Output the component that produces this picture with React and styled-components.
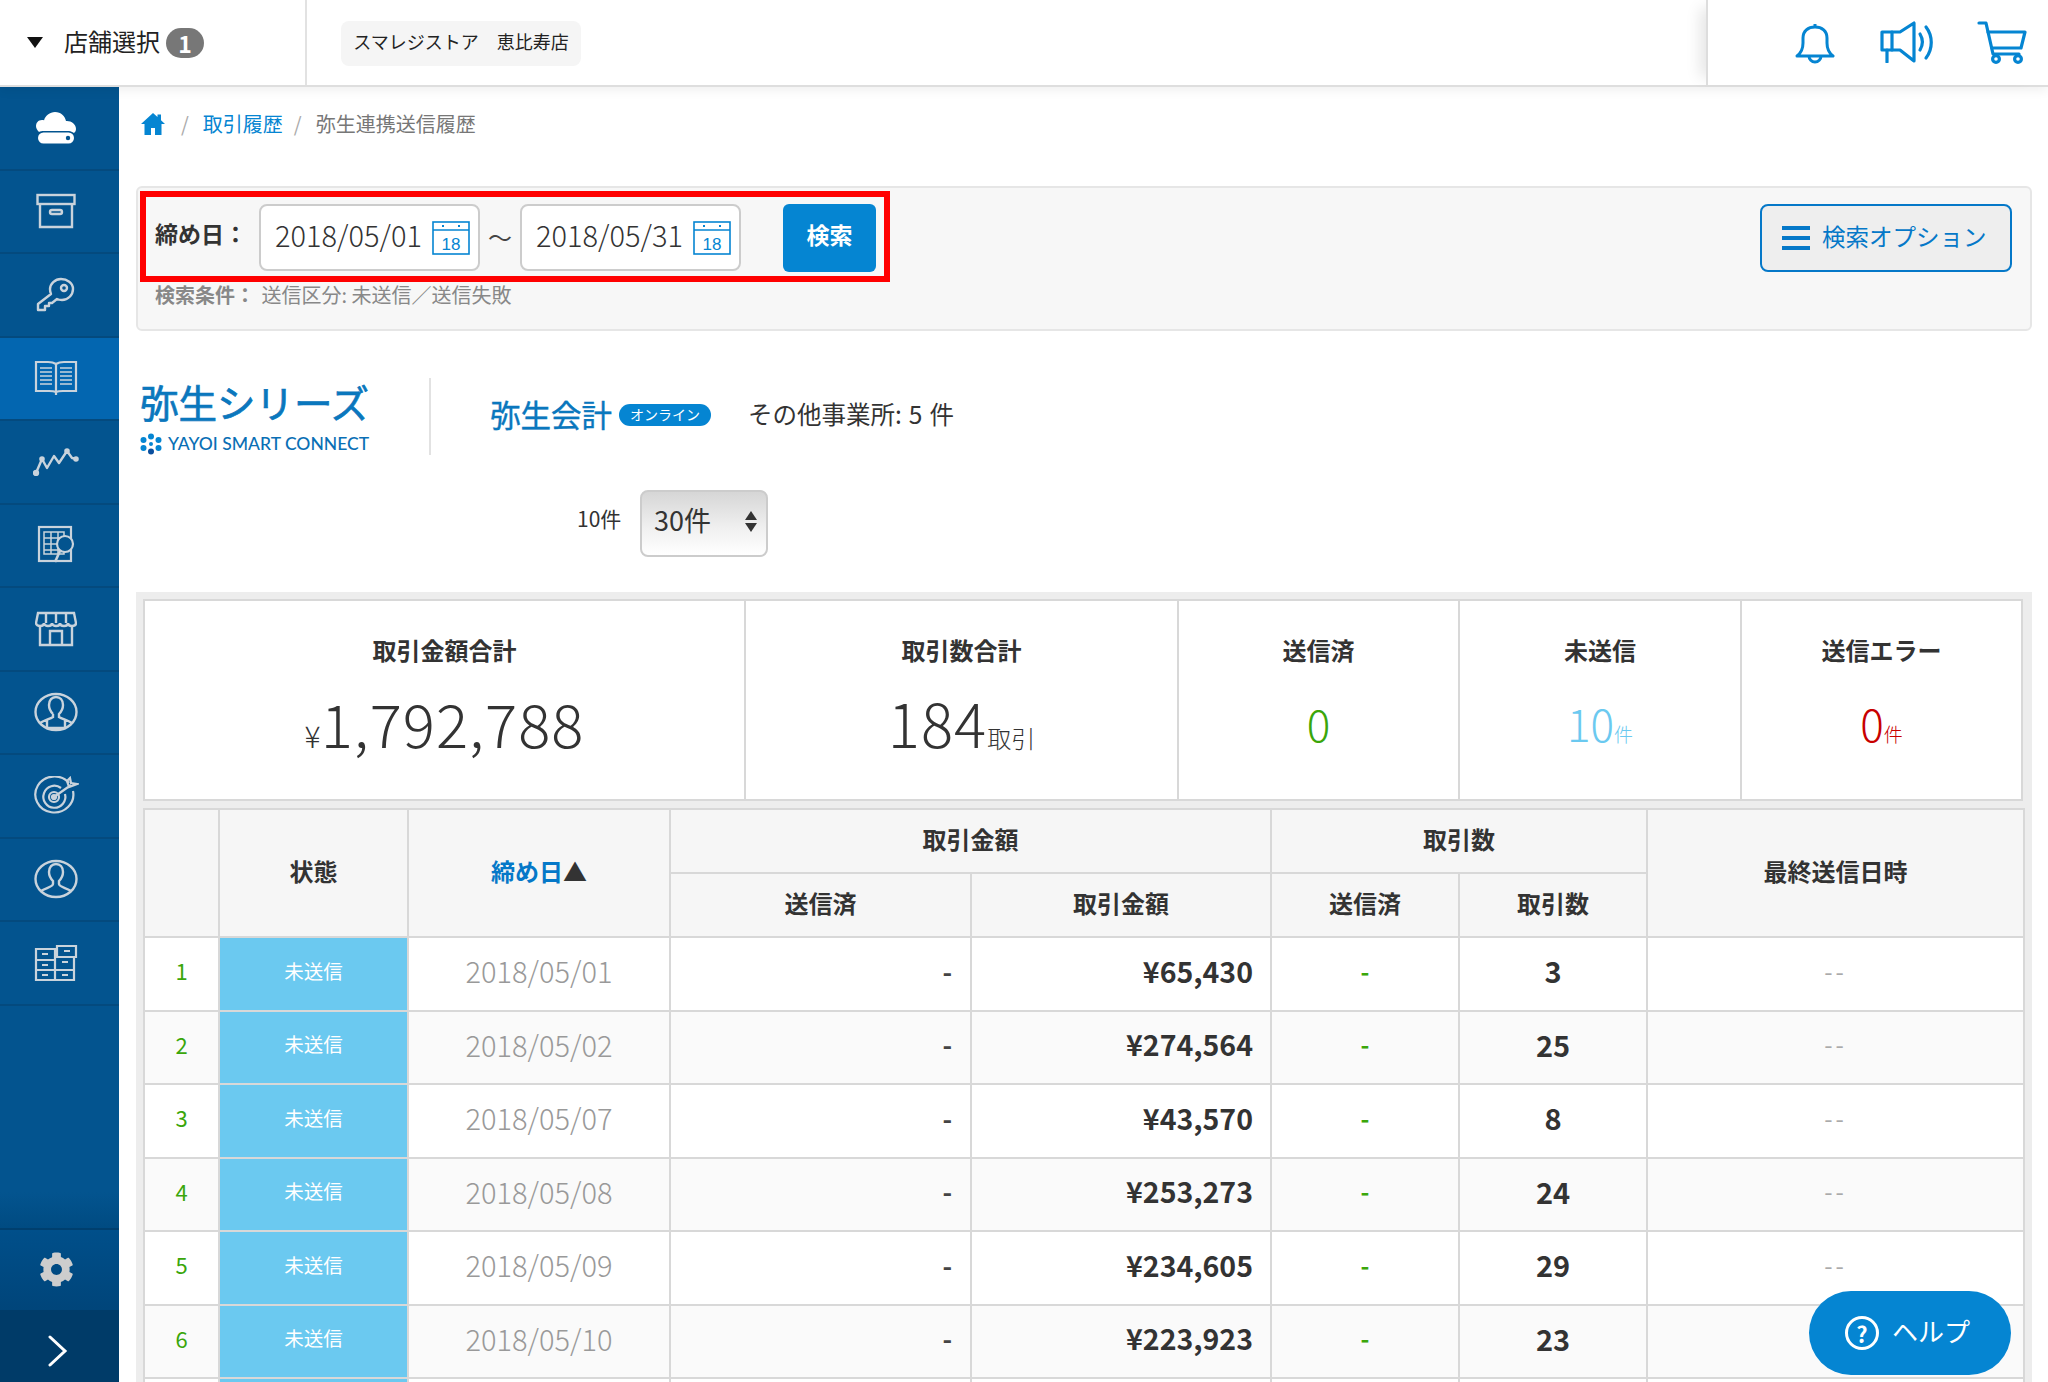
import styled, { createGlobalStyle } from "styled-components";
import { FaCog } from "react-icons/fa";

const blue = "#0585d2";
const line = "#d8d8d8";
const jp = `"Noto Sans CJK JP", "Noto Sans", sans-serif`;

const rows = [
    { no: 1, date: "2018/05/01", amount: "¥65,430", count: 3 },
    { no: 2, date: "2018/05/02", amount: "¥274,564", count: 25 },
    { no: 3, date: "2018/05/07", amount: "¥43,570", count: 8 },
    { no: 4, date: "2018/05/08", amount: "¥253,273", count: 24 },
    { no: 5, date: "2018/05/09", amount: "¥234,605", count: 29 },
    { no: 6, date: "2018/05/10", amount: "¥223,923", count: 23 },
];

const navIcons = [
    <svg width="40" height="32" viewBox="0 0 40 32" key="cloud">
        <path fill="#fff" d="M3 20C1 18 0 16 0 14c0-3 2-6 6-6 1 0 2 0 2 .5C9 4 14 0 19 0c6 0 10 4 11 9 5-.5 10 3 10 8 0 2-1 3-2 4-2-1-3-2-5-2H8c-2 0-4 0-5 1z" />
        <rect x="2" y="20.5" width="36" height="11" rx="5.5" fill="#fff" />
        <circle cx="32" cy="26" r="2.2" fill="#03548f" />
    </svg>,
    <svg width="40" height="36" viewBox="0 0 40 36" key="box" fill="none" stroke="#c9d3dc" strokeWidth="2.4">
        <rect x="1.5" y="2" width="37" height="9" />
        <path d="M4 11v23h32V11" />
        <rect x="14" y="17" width="12" height="4" rx="2" />
    </svg>,
    <svg width="40" height="36" viewBox="0 0 40 36" key="key" fill="none" stroke="#c9d3dc" strokeWidth="2.4" strokeLinejoin="round">
        <path d="M25 2c-6 0-11 5-11 10 0 2 0 3 1 5L2 27v6h7v-4h4v-3h3l5-4c2 1 3 1 5 1 6 0 11-5 11-11S31 2 25 2z" />
        <circle cx="28" cy="11" r="3" />
    </svg>,
    <svg width="44" height="36" viewBox="0 0 44 36" key="book" fill="none" stroke="#c9d3dc" strokeWidth="2.2">
        <path d="M22 4c-3-2-6-2-8-2H2v29h13c3 0 5 0 7 1 2-1 4-1 7-1h13V2H30c-2 0-5 0-8 2zM22 4v31" />
        <path strokeWidth="1.5" d="M6 8h12M6 12h12M6 16h12M6 20h12M6 24h12M26 8h12M26 12h12M26 16h12M26 20h12M26 24h12" />
    </svg>,
    <svg width="46" height="28" viewBox="0 0 46 28" key="chart" fill="none" stroke="#c9d3dc" strokeWidth="2.4" strokeLinejoin="round">
        <path d="M3 25 9 11l5 9 7-12 5 7 8-12 5 7 5 1" />
        <circle cx="3" cy="25" r="2" fill="#c9d3dc" />
        <circle cx="9" cy="11" r="1.6" fill="#c9d3dc" />
        <circle cx="34" cy="3" r="1.6" fill="#c9d3dc" />
        <circle cx="43" cy="11" r="1.6" fill="#c9d3dc" />
    </svg>,
    <svg width="38" height="40" viewBox="0 0 38 40" key="sheet" fill="none" stroke="#c9d3dc" strokeWidth="2.2">
        <rect x="2" y="2" width="32" height="34" />
        <path strokeWidth="1.5" d="M7 7h20v22H7zM7 13h20M7 19h20M7 25h20M14 7v22M21 7v22" />
        <circle cx="28" cy="19" r="8" fill="#03548f" />
        <path d="M23 26l-5 11" strokeWidth="2.6" />
    </svg>,
    <svg width="42" height="36" viewBox="0 0 42 36" key="shop" fill="none" stroke="#c9d3dc" strokeWidth="2.4">
        <path d="M3 2h36l2 10c0 2-2 3-4 3s-4-1-4-3c0 2-2 3-4 3s-4-1-4-3c0 2-2 3-4 3s-4-1-4-3c0 2-2 3-4 3s-4-1-4-3c0 2-2 3-4 3s-4-1-4-3z" />
        <path d="M11 2v10M21 2v10M31 2v10M5 14v20h32V14M15 34V20h12v14" />
    </svg>,
    <svg width="44" height="40" viewBox="0 0 44 40" key="person1" fill="none" stroke="#c9d3dc" strokeWidth="2.4">
        <ellipse cx="22" cy="20" rx="20.5" ry="18" />
        <path d="M15 13c0-5 3-8 7-8s7 3 7 8c0 4-2 7-4 9v3c3 2 8 3 13 6M19 22c-2-2-4-5-4-9M19 22v3c-3 2-8 3-13 6M13 28v8h18v-8" />
    </svg>,
    <svg width="46" height="40" viewBox="0 0 46 40" key="target" fill="none" stroke="#c9d3dc" strokeWidth="2.2">
        <path d="M36 7A19 18 0 1 0 40 15" />
        <path d="M28 12A11 11 0 1 0 32 18" />
        <circle cx="21" cy="21" r="5" />
        <circle cx="21" cy="21" r="2" fill="#c9d3dc" />
        <path d="M21 21 38 9M34 5l2 6 8-3-6-1-1-5z" />
    </svg>,
    <svg width="44" height="40" viewBox="0 0 44 40" key="person2" fill="none" stroke="#c9d3dc" strokeWidth="2.4">
        <ellipse cx="22" cy="20" rx="20.5" ry="18" />
        <path d="M7 32c4-3 12-4 12-7v-3c-2-2-4-5-4-9 0-5 3-8 7-8s7 3 7 8c0 4-2 7-4 9v3c0 3 8 4 12 7" />
    </svg>,
    <svg width="44" height="38" viewBox="0 0 44 38" key="drawers" fill="none" stroke="#c9d3dc" strokeWidth="2.2">
        <path d="M2 5h19v11H2zM23 2h19v11H23zM2 16h19v10H2zM21 13h19v13H21zM2 26h19v10H2zM21 26h19v10H21z" />
        <path d="M8 10h6M30 7h6M8 21h6M28 18h6M8 31h6M28 31h6" />
    </svg>,
];

function Calendar() {
    return (
        <svg width="38" height="34" viewBox="0 0 38 34" fill="none" stroke={blue} strokeWidth="1.6">
            <rect x="1" y="1" width="36" height="32" />
            <path d="M1 9h36" />
            <path d="M10 5h2M26 5h2" strokeWidth="2" />
            <text x="19" y="29" fontSize="17" textAnchor="middle" fill={blue} stroke="none" fontFamily="Liberation Sans">
                18
            </text>
        </svg>
    );
}

function App() {
    return (
        <Page>
            <GlobalStyle />
            <Header>
                <StoreSelect>
                    <Caret />
                    <StoreLabel>店舗選択</StoreLabel>
                    <CountBadge>1</CountBadge>
                </StoreSelect>
                <StoreChip>スマレジストア　恵比寿店</StoreChip>
                <HeaderIcons>
                    <BellIcon width="40" height="44" viewBox="0 0 40 44" fill="none" stroke={blue} strokeWidth="3" strokeLinejoin="round">
                        <path d="M2 34c4-3 6-7 6-13v-5C8 9 13 5 20 5s12 4 12 11v5c0 6 2 10 6 13z" />
                        <path d="M20 5V2M14 34a6 6 0 0 0 12 0" />
                    </BellIcon>
                    <svg width="56" height="42" viewBox="0 0 56 42" fill="none" stroke={blue} strokeWidth="3.2" strokeLinejoin="round" strokeLinecap="round">
                        <path d="M2 11h18L34 2v38L20 29H2z" />
                        <path d="M12 11v18M7 29v12" />
                        <path d="M40 13c3 5 3 11 0 16M46 6c7 9 7 22 0 31" />
                    </svg>
                    <svg width="50" height="44" viewBox="0 0 50 44" fill="none" stroke={blue} strokeWidth="3.2" strokeLinejoin="round" strokeLinecap="round">
                        <path d="M2 3h7l7 31h26" />
                        <path d="M11 12h37l-4 16H15" />
                        <circle cx="19" cy="39" r="3.4" />
                        <circle cx="41" cy="39" r="3.4" />
                    </svg>
                </HeaderIcons>
            </Header>
            <Body>
                <Sidebar>
                    <NavList>
                        {navIcons.map((icon, idx) => (
                            <NavItem key={idx} $active={idx === 3}>
                                {icon}
                            </NavItem>
                        ))}
                    </NavList>
                    <SettingRow>
                        <FaCog size={35} color="#cdcdcd" />
                    </SettingRow>
                    <CollapseRow>
                        <svg width="22" height="32" viewBox="0 0 22 32" fill="none" stroke="#fff" strokeWidth="3" strokeLinecap="round">
                            <path d="M3 2l15 14L3 30" />
                        </svg>
                    </CollapseRow>
                </Sidebar>
                <Main>
                    <Breadcrumb>
                        <HomeLink>
                            <svg width="24" height="22" viewBox="0 0 24 22" fill={blue}>
                                <path d="M12 0 0 11h3.5v11H10v-7h4v7h6.5V11H24l-4-3.7V1.5h-3.5v2.6z" />
                            </svg>
                        </HomeLink>
                        <Slash>/</Slash>
                        <CrumbLink>取引履歴</CrumbLink>
                        <Slash>/</Slash>
                        <span>弥生連携送信履歴</span>
                    </Breadcrumb>
                    <SearchPanel>
                        <SearchRow>
                            <DateLabel>締め日：</DateLabel>
                            <DateInput>
                                <span>2018/05/01</span>
                                <Calendar />
                            </DateInput>
                            <Tilde>〜</Tilde>
                            <DateInput>
                                <span>2018/05/31</span>
                                <Calendar />
                            </DateInput>
                            <SearchButton>検索</SearchButton>
                            <OptionButton>
                                <Burger />
                                <span>検索オプション</span>
                            </OptionButton>
                        </SearchRow>
                        <Conditions>
                            <b>検索条件：</b> 送信区分: 未送信／送信失敗
                        </Conditions>
                        <RedFrame />
                    </SearchPanel>
                    <BrandRow>
                        <Brand>
                            <BrandTitle>弥生シリーズ</BrandTitle>
                            <BrandSub>
                                <svg width="22" height="22" viewBox="0 0 22 22" fill={blue}>
                                    <circle cx="11" cy="3.5" r="3" />
                                    <circle cx="3.5" cy="7" r="3" />
                                    <circle cx="18.5" cy="7" r="3" />
                                    <circle cx="11" cy="11" r="2" />
                                    <circle cx="3.5" cy="15" r="3" />
                                    <circle cx="18.5" cy="15" r="3" />
                                    <circle cx="11" cy="18.5" r="3" fill="#0a4f9e" />
                                </svg>
                                YAYOI SMART CONNECT
                            </BrandSub>
                        </Brand>
                        <BrandDivider />
                        <ProductName>弥生会計</ProductName>
                        <OnlinePill>オンライン</OnlinePill>
                        <OtherOffices>その他事業所: 5 件</OtherOffices>
                    </BrandRow>
                    <PagerRow>
                        <PagerLabel>10件</PagerLabel>
                        <PerPage>
                            30件
                            <SelectArrows>
                                <i />
                                <i />
                            </SelectArrows>
                        </PerPage>
                    </PagerRow>
                    <TableWrap>
                        <Summary>
                            <SummaryCell>
                                <SummaryTitle>取引金額合計</SummaryTitle>
                                <BigValue>
                                    <Yen>¥</Yen>1,792,788
                                </BigValue>
                            </SummaryCell>
                            <SummaryCell>
                                <SummaryTitle>取引数合計</SummaryTitle>
                                <BigValue>
                                    184<Unit>取引</Unit>
                                </BigValue>
                            </SummaryCell>
                            <SummaryCell>
                                <SummaryTitle>送信済</SummaryTitle>
                                <StatusValue $color="#3aa60a">0</StatusValue>
                            </SummaryCell>
                            <SummaryCell>
                                <SummaryTitle>未送信</SummaryTitle>
                                <StatusValue $color="#6bc9f0">
                                    10<small>件</small>
                                </StatusValue>
                            </SummaryCell>
                            <SummaryCell>
                                <SummaryTitle>送信エラー</SummaryTitle>
                                <StatusValue $color="#c80000">
                                    0<small>件</small>
                                </StatusValue>
                            </SummaryCell>
                        </Summary>
                        <HistoryTable>
                            <colgroup>
                                {[75, 189, 262, 301, 300, 188, 188, 377].map((w, idx) => (
                                    <col key={idx} width={w} />
                                ))}
                            </colgroup>
                            <thead>
                                <tr>
                                    <th rowSpan={2} />
                                    <th rowSpan={2}>状態</th>
                                    <SortHead rowSpan={2}>
                                        締め日<span>▲</span>
                                    </SortHead>
                                    <th colSpan={2}>取引金額</th>
                                    <th colSpan={2}>取引数</th>
                                    <th rowSpan={2}>最終送信日時</th>
                                </tr>
                                <tr>
                                    <th>送信済</th>
                                    <th>取引金額</th>
                                    <th>送信済</th>
                                    <th>取引数</th>
                                </tr>
                            </thead>
                            <tbody>
                                {rows.map((row) => (
                                    <tr key={row.no}>
                                        <NoCell>{row.no}</NoCell>
                                        <StateCell>未送信</StateCell>
                                        <DateCell>{row.date}</DateCell>
                                        <DashCell>-</DashCell>
                                        <AmountCell>{row.amount}</AmountCell>
                                        <SentCell>-</SentCell>
                                        <CountCell>{row.count}</CountCell>
                                        <LastCell>--</LastCell>
                                    </tr>
                                ))}
                                <tr>
                                    <NoCell />
                                    <StateCell />
                                    <DateCell />
                                    <DashCell />
                                    <AmountCell />
                                    <SentCell />
                                    <CountCell />
                                    <LastCell />
                                </tr>
                            </tbody>
                        </HistoryTable>
                    </TableWrap>
                </Main>
            </Body>
            <HelpButton>
                <HelpMark>?</HelpMark>
                <HelpText>ヘルプ</HelpText>
            </HelpButton>
        </Page>
    );
}

const GlobalStyle = createGlobalStyle`
    html, body {
        margin: 0;
        padding: 0;
        background: #fff;
    }
    * {
        box-sizing: border-box;
    }
`;

const Page = styled.div`
    width: 2048px;
    height: 1382px;
    overflow: hidden;
    display: flex;
    flex-direction: column;
    font-family: ${jp};
    color: #333;
    position: relative;
`;

const Header = styled.header`
    height: 87px;
    flex: none;
    display: flex;
    align-items: stretch;
    background: #fff;
    border-bottom: 2px solid #dedede;
    box-shadow: 0 4px 10px rgba(0, 0, 0, 0.06);
    position: relative;
    z-index: 2;
`;

const StoreSelect = styled.div`
    width: 307px;
    display: flex;
    align-items: center;
    padding-left: 27px;
    border-right: 2px solid #e2e2e2;
`;

const Caret = styled.span`
    width: 0;
    height: 0;
    border-left: 8.5px solid transparent;
    border-right: 8.5px solid transparent;
    border-top: 11px solid #111;
    margin: 0 21px 0 0;
`;

const StoreLabel = styled.span`
    padding-bottom: 4px;
    font-size: 24px;
    color: #222;
`;

const CountBadge = styled.span`
    width: 38px;
    height: 30px;
    border-radius: 15px;
    margin-left: 6px;
    background: #777;
    color: #fff;
    font-size: 23px;
    font-weight: 700;
    display: flex;
    align-items: center;
    justify-content: center;
`;

const StoreChip = styled.div`
    align-self: flex-start;
    margin: 21px 0 0 34px;
    width: 240px;
    height: 45px;
    padding-bottom: 5px;
    border-radius: 8px;
    background: #f5f5f5;
    font-size: 18px;
    color: #222;
    display: flex;
    align-items: center;
    justify-content: center;
    white-space: nowrap;
`;

const HeaderIcons = styled.div`
    margin-left: auto;
    width: 342px;
    padding: 0 21px 2px 90px;
    display: flex;
    align-items: center;
    justify-content: space-between;
    border-left: 2px solid #ddd;
    box-shadow: -14px 0 14px -8px rgba(0, 0, 0, 0.1);
`;

const BellIcon = styled.svg`
    margin: 5px 3px 0 -3px;
`;

const Body = styled.div`
    flex: 1;
    display: flex;
    min-height: 0;
`;

const Sidebar = styled.nav`
    width: 119px;
    flex: none;
    display: flex;
    flex-direction: column;
    background: linear-gradient(#03548f 0, #03548f 1105px, #004a80 1145px);
`;

const NavList = styled.div`
    flex: 1;
`;

const NavItem = styled.div`
    height: 83.5px;
    padding-right: 8px;
    display: flex;
    align-items: center;
    justify-content: center;
    border-bottom: 2px solid #044a7e;
    background: ${(p) => (p.$active ? "#0366b0" : "transparent")};
`;

const SettingRow = styled.div`
    height: 82px;
    padding: 0 6px 2px 0;
    display: flex;
    align-items: center;
    justify-content: center;
    background: linear-gradient(#004f8a, #00457a);
    border-top: 2px solid #003f6e;
`;

const CollapseRow = styled.div`
    height: 72px;
    padding: 10px 3px 0 0;
    display: flex;
    align-items: center;
    justify-content: center;
    background: #003b68;
`;

const Main = styled.main`
    flex: 1;
    min-width: 0;
    padding: 22px 16px 0 17px;
`;

const Breadcrumb = styled.div`
    height: 30px;
    padding: 0 0 1px 5px;
    display: flex;
    align-items: center;
    font-size: 20px;
    color: #777;
`;

const HomeLink = styled.span`
    display: flex;
    margin-right: 5px;
`;

const Slash = styled.span`
    margin: 0 14px 0 11px;
    color: #aaa;
`;

const CrumbLink = styled.span`
    color: ${blue};
`;

const SearchPanel = styled.section`
    position: relative;
    margin-top: 47px;
    height: 145px;
    padding: 16px 18px 0 17px;
    background: #f7f7f7;
    border: 2px solid #e6e6e6;
    border-radius: 6px;
`;

const SearchRow = styled.div`
    display: flex;
    align-items: center;
    height: 67px;
`;

const DateLabel = styled.span`
    width: 104px;
    padding-bottom: 9px;
    font-size: 23px;
    font-weight: 700;
    white-space: nowrap;
`;

const DateInput = styled.div`
    width: 221px;
    height: 67px;
    padding: 0 8px 0 14px;
    display: flex;
    align-items: center;
    justify-content: space-between;
    background: #fff;
    border: 2px solid #ccc;
    border-radius: 8px;
    font-size: 29px;
    font-weight: 300;
    color: #333;

    span {
        padding-bottom: 8px;
    }
`;

const Tilde = styled.span`
    width: 40px;
    padding-bottom: 3px;
    text-align: center;
    font-size: 24px;
    color: #444;
`;

const SearchButton = styled.button`
    width: 93px;
    height: 68px;
    margin-left: 42px;
    padding: 0 0 7px;
    border: 0;
    border-radius: 6px;
    background: ${blue};
    color: #fff;
    font-family: ${jp};
    font-size: 23px;
    font-weight: 700;
`;

const OptionButton = styled.button`
    margin-left: auto;
    width: 252px;
    height: 68px;
    padding: 0 0 0 20px;
    display: flex;
    align-items: center;
    gap: 12px;
    background: #eee;
    border: 2px solid #0578c8;
    border-radius: 8px;
    color: #0578c8;
    font-family: ${jp};
    font-size: 23.5px;
    white-space: nowrap;

    span:last-child {
        padding-bottom: 3px;
    }
`;

const Burger = styled.span`
    width: 28px;
    height: 24px;
    border-top: 4px solid #0578c8;
    border-bottom: 4px solid #0578c8;
    position: relative;

    &::after {
        content: "";
        position: absolute;
        left: 0;
        right: 0;
        top: 6px;
        height: 4px;
        background: #0578c8;
    }
`;

const Conditions = styled.div`
    margin-top: 10px;
    height: 28px;
    line-height: 28px;
    font-size: 20px;
    color: #888;

    b {
        margin-right: 2px;
    }
`;

const RedFrame = styled.div`
    position: absolute;
    left: 2px;
    top: 3px;
    width: 750px;
    height: 91px;
    border: 6px solid #f00;
    pointer-events: none;
`;

const BrandRow = styled.div`
    margin-top: 47px;
    height: 77px;
    padding-left: 4px;
    display: flex;
    align-items: center;
`;

const Brand = styled.div`
    width: 230px;
    color: ${blue};
`;

const BrandTitle = styled.div`
    font-size: 38.5px;
    line-height: 50px;
    -webkit-text-stroke: 0.7px #0a77bd;
    color: #0a77bd;
    white-space: nowrap;
    margin-top: -3px;
`;

const BrandSub = styled.div`
    margin-top: 7px;
    display: flex;
    align-items: center;
    gap: 6px;
    font-family: "Lato", sans-serif;
    font-size: 17.5px;
    font-weight: 500;
    line-height: 22px;
    color: #0a6fb5;
    white-space: nowrap;
`;

const BrandDivider = styled.div`
    width: 2px;
    height: 77px;
    margin: 0 59px 0 59px;
    background: #e2e2e2;
`;

const ProductName = styled.span`
    margin-bottom: 6px;
    font-size: 30.5px;
    -webkit-text-stroke: 0.4px #0a77bd;
    color: #0a77bd;
    white-space: nowrap;
`;

const OnlinePill = styled.span`
    width: 92px;
    height: 22px;
    margin: 0 37px 4px 7px;
    padding-bottom: 2px;
    border-radius: 11px;
    background: ${blue};
    color: #fff;
    font-size: 14px;
    display: flex;
    align-items: center;
    justify-content: center;
`;

const OtherOffices = styled.span`
    margin-bottom: 6px;
    font-size: 24.5px;
    color: #333;
    white-space: nowrap;
    word-spacing: 1.5px;
`;

const PagerRow = styled.div`
    margin-top: 35px;
    height: 67px;
    padding-left: 441px;
    display: flex;
    align-items: center;
`;

const PagerLabel = styled.span`
    width: 63px;
    margin-bottom: 12px;
    font-size: 21px;
    color: #333;
    white-space: nowrap;
`;

const PerPage = styled.div`
    position: relative;
    width: 128px;
    height: 67px;
    padding: 0 0 9px 12px;
    display: flex;
    align-items: center;
    border: 2px solid #ccc;
    border-radius: 8px;
    background: linear-gradient(#d6d6d6, #efefef 55%, #fff);
    font-size: 27px;
    color: #333;
`;

const SelectArrows = styled.span`
    position: absolute;
    right: 9px;
    top: 19px;
    display: flex;
    flex-direction: column;
    gap: 3px;

    i {
        width: 0;
        height: 0;
        border-left: 6px solid transparent;
        border-right: 6px solid transparent;
        border-bottom: 9px solid #333;
    }
    i:last-child {
        border-bottom: 0;
        border-top: 9px solid #333;
    }
`;

const TableWrap = styled.section`
    margin-top: 35px;
    padding: 7px 8px 0 7px;
    background: #ededed;
    height: 800px;
`;

const Summary = styled.div`
    display: grid;
    grid-template-columns: 599px 433px 281px 282px 1fr;
    width: 1880px;
    height: 202px;
    background: #fff;
    border: 2px solid ${line};
`;

const SummaryCell = styled.div`
    display: flex;
    flex-direction: column;
    align-items: center;
    padding-top: 32px;

    & + & {
        border-left: 2px solid ${line};
    }
`;

const SummaryTitle = styled.div`
    font-size: 24px;
    line-height: 34px;
    font-weight: 700;
    color: #333;
    white-space: nowrap;
`;

const BigValue = styled.div`
    margin-top: 17px;
    height: 76px;
    line-height: 76px;
    font-size: 60px;
    letter-spacing: 1px;
    font-weight: 300;
    color: #333;
    white-space: nowrap;
`;

const Yen = styled.span`
    font-size: 30px;
    letter-spacing: 0;
`;

const Unit = styled.span`
    font-size: 24px;
    letter-spacing: 0;
`;

const StatusValue = styled.div`
    margin-top: 18px;
    height: 76px;
    line-height: 76px;
    font-size: 44px;
    font-weight: 300;
    color: ${(p) => p.$color};
    white-space: nowrap;

    small {
        font-size: 19px;
    }
`;

const HistoryTable = styled.table`
    width: 1880px;
    margin-top: 7px;
    table-layout: fixed;
    border-collapse: collapse;
    background: #fff;

    th,
    td {
        border: 2px solid ${line};
        padding: 0 0 5px;
        text-align: center;
    }
    td {
        padding-bottom: 7px;
    }
    th {
        height: 64px;
        background: #f6f6f6;
        font-size: 24px;
        font-weight: 700;
        color: #333;
    }
    td {
        height: 73.5px;
    }
    tbody tr:nth-child(even) td {
        background: #fafafa;
    }
`;

const SortHead = styled.th`
    && {
        color: #0578c8;
    }
    span {
        color: #333;
    }
`;

const NoCell = styled.td`
    font-size: 22px;
    color: #3aa60a;
`;

const StateCell = styled.td`
    &&&& {
        background: #6bc9f0;
    }
    font-size: 19.5px;
    color: #fff;
`;

const DateCell = styled.td`
    font-size: 29px;
    font-weight: 300;
    color: #999;
`;

const DashCell = styled.td`
    && {
        text-align: right;
        padding-right: 18px;
    }
    font-size: 26px;
    font-weight: 700;
    color: #444;
`;

const AmountCell = styled.td`
    && {
        text-align: right;
        padding-right: 17px;
    }
    font-size: 28.5px;
    font-weight: 700;
    color: #333;
`;

const SentCell = styled.td`
    font-size: 24px;
    font-weight: 700;
    color: #3aa60a;
`;

const CountCell = styled.td`
    font-size: 29px;
    font-weight: 700;
    color: #333;
`;

const LastCell = styled.td`
    font-size: 24px;
    letter-spacing: 3px;
    color: #aaa;
`;

const HelpButton = styled.div`
    position: absolute;
    right: 37px;
    bottom: 7px;
    width: 202px;
    height: 84px;
    padding-left: 36px;
    display: flex;
    align-items: center;
    gap: 13px;
    border-radius: 42px;
    background: ${blue};
    color: #fff;
`;

const HelpMark = styled.span`
    width: 34px;
    height: 34px;
    border: 3.5px solid #fff;
    border-radius: 50%;
    display: flex;
    align-items: center;
    justify-content: center;
    font-size: 22px;
    font-weight: 700;
    line-height: 1;
`;

const HelpText = styled.span`
    margin-bottom: 6px;
    font-size: 26px;
    white-space: nowrap;
`;

export default App;
